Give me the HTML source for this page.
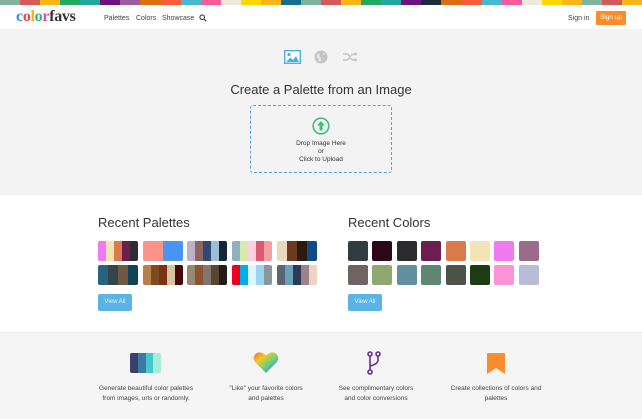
<!DOCTYPE html>
<html><head><meta charset="utf-8"><style>
*{margin:0;padding:0;box-sizing:border-box}
body{width:642px;height:419px;overflow:hidden;font-family:"Liberation Sans",sans-serif;background:#fff;position:relative;color:#333}
.abs{position:absolute}
.stripe{top:0;left:0;width:642px;height:5px;display:flex}
.stripe div{flex:1}
.nav{top:5px;left:0;width:642px;height:24px;background:#fff}
.logo{left:16px;top:9px;font-size:16px;font-weight:bold;letter-spacing:-0.3px;font-family:"Liberation Serif",serif;line-height:16px}
.navl{top:15px;font-size:7px;color:#444}
.hero{top:29px;left:0;width:642px;height:166px;background:#f3f3f3}
h2{font-weight:normal;font-size:13px;color:#333;position:absolute}
.drop{left:250px;top:105px;width:142px;height:68px;border:1.5px dashed #5b9ee0;border-radius:3px;text-align:center;font-size:6.5px;line-height:8px;color:#333}
.sw{position:absolute;height:20px;width:40px;border-radius:2px;overflow:hidden;display:flex}
.sw div{flex:1}
.sq{position:absolute;width:20px;height:20px;border-radius:2px}
.btn{position:absolute;width:34px;height:17px;background:#5ab4e6;border-radius:2px;color:#e8f4fb;font-size:6px;text-align:center;line-height:17px}
.foot{top:332px;left:0;width:642px;height:87px;background:#f4f5f4;border-top:1px solid #ececec}
.ft{position:absolute;top:384px;font-size:6.5px;line-height:10px;color:#444;text-align:center;width:140px}
</style></head><body>
<div class="abs stripe">
<div style="background:#7fb39b"></div><div style="background:#d45a5a"></div><div style="background:#fbb517"></div><div style="background:#22a85f"></div><div style="background:#1fa99f"></div><div style="background:#6c1380"></div><div style="background:#9d5aa5"></div><div style="background:#db6e10"></div><div style="background:#fb5a3a"></div><div style="background:#4ab7d4"></div><div style="background:#fc5b9b"></div><div style="background:#efe9dc"></div><div style="background:#fed700"></div><div style="background:#fbb517"></div><div style="background:#186e90"></div><div style="background:#7fb39b"></div><div style="background:#d45a5a"></div><div style="background:#fbb517"></div><div style="background:#22a85f"></div><div style="background:#1fa99f"></div><div style="background:#6c1380"></div><div style="background:#1b2b3b"></div><div style="background:#db6e10"></div><div style="background:#fb5a3a"></div><div style="background:#4ab7d4"></div><div style="background:#fc5b9b"></div><div style="background:#efe9dc"></div><div style="background:#fed700"></div><div style="background:#fbb517"></div><div style="background:#7fb39b"></div><div style="background:#d45a5a"></div><div style="background:#fbb517"></div>
</div>
<div class="abs nav"></div>
<div class="abs logo"><span style="color:#3a8fd6">c</span><span style="color:#e84b3c">o</span><span style="color:#f3b21b">l</span><span style="color:#2bb673">o</span><span style="color:#e84b9b">r</span><span style="color:#333">favs</span></div>
<div class="abs navl" style="left:104px">Palettes</div>
<div class="abs navl" style="left:136px">Colors</div>
<div class="abs navl" style="left:162px">Showcase</div>
<svg class="abs" style="left:199px;top:14px" width="8" height="8" viewBox="0 0 8 8"><circle cx="3.2" cy="3.2" r="2.3" fill="none" stroke="#444" stroke-width="1.1"/><path d="M5 5L7.3 7.3" stroke="#444" stroke-width="1.2"/></svg>
<div class="abs navl" style="left:568px">Sign in</div>
<div class="abs" style="left:596px;top:11px;width:30px;height:14px;background:#fd8c28;color:#fff;font-size:6.5px;text-align:center;line-height:14px;border-radius:1px">Sign up</div>
<div class="abs hero"></div>
<svg class="abs" style="left:284px;top:50px" width="17" height="14" viewBox="0 0 17 14"><rect x="0.7" y="0.7" width="15.6" height="12.6" fill="#fff" stroke="#4ab0e6" stroke-width="1.4"/><circle cx="5" cy="4.5" r="1.6" fill="#4ab0e6"/><path d="M2 12L6.5 7.5L9 10L12 6L15 12Z" fill="#4ab0e6"/></svg>
<svg class="abs" style="left:314px;top:50px" width="14" height="14" viewBox="0 0 14 14"><circle cx="7" cy="7" r="6.5" fill="#c4c4c4"/><path d="M3 4Q5 3 6 5Q5 7 7 8Q8 10 6 12Q4 10 4 8Q2 7 3 4ZM9 2Q11 3 11 5Q9 5 9 2Z" fill="#e4e4e4"/></svg>
<svg class="abs" style="left:342px;top:51px" width="16" height="12" viewBox="0 0 16 12"><path d="M1 3H4Q7 3 8 6Q9 9 12 9H14M1 9H4Q6 9 7 7M9 5Q10 3 12 3H14" fill="none" stroke="#c4c4c4" stroke-width="1.6"/><path d="M13 1L15.5 3L13 5ZM13 7L15.5 9L13 11Z" fill="#c4c4c4"/></svg>
<h2 style="left:0;width:642px;text-align:center;top:82px">Create a Palette from an Image</h2>
<div class="abs drop">
<svg style="margin-top:11px" width="18" height="18" viewBox="0 0 18 18"><circle cx="9" cy="9" r="7.8" fill="none" stroke="#3fbf7f" stroke-width="1.6"/><path d="M9 4L13 8.5H10.5V13.5H7.5V8.5H5Z" fill="#3fbf7f"/></svg>
<div style="margin-top:2px">Drop Image Here<br>or<br>Click to Upload</div>
</div>
<h2 style="left:98px;top:215px">Recent Palettes</h2>
<h2 style="left:348px;top:215px">Recent Colors</h2>
<div class="sw" style="left:98px;top:241px"><div style="background:#f07bf0"></div><div style="background:#f2e4b4"></div><div style="background:#db7b4b"></div><div style="background:#6a1f4e"></div><div style="background:#2d2d33"></div></div>
<div class="sw" style="left:143px;top:241px"><div style="background:#fa948a"></div><div style="background:#4a94f3"></div></div>
<div class="sw" style="left:187px;top:241px"><div style="background:#bfb1c4"></div><div style="background:#8d6663"></div><div style="background:#2d4a71"></div><div style="background:#9dbdd4"></div><div style="background:#13263a"></div></div>
<div class="sw" style="left:232px;top:241px"><div style="background:#8fb1bd"></div><div style="background:#d4ebad"></div><div style="background:#fdd0dd"></div><div style="background:#da5973"></div><div style="background:#f3a0a5"></div></div>
<div class="sw" style="left:277px;top:241px"><div style="background:#e8d8bd"></div><div style="background:#6c3a1e"></div><div style="background:#2c1a10"></div><div style="background:#0f4c84"></div></div>
<div class="sw" style="left:98px;top:265px"><div style="background:#28647f"></div><div style="background:#33454a"></div><div style="background:#6e5a44"></div><div style="background:#124455"></div></div>
<div class="sw" style="left:143px;top:265px"><div style="background:#b58148"></div><div style="background:#7d4a22"></div><div style="background:#7a3410"></div><div style="background:#d7c2a3"></div><div style="background:#4a0808"></div></div>
<div class="sw" style="left:187px;top:265px"><div style="background:#968872"></div><div style="background:#8c5431"></div><div style="background:#82766e"></div><div style="background:#594632"></div><div style="background:#221c1a"></div></div>
<div class="sw" style="left:232px;top:265px"><div style="background:#e8001c"></div><div style="background:#00aee8"></div><div style="background:#d9f8fd"></div><div style="background:#9bd4ee"></div><div style="background:#8a969c"></div></div>
<div class="sw" style="left:277px;top:265px"><div style="background:#5e6472"></div><div style="background:#6aa0b8"></div><div style="background:#2c3a58"></div><div style="background:#9a8288"></div><div style="background:#ecd3c2"></div></div>
<div class="btn" style="left:98px;top:294px">View All</div>
<div class="sq" style="left:348px;top:241px;background:#2f3d40"></div>
<div class="sq" style="left:372px;top:241px;background:#2c0718"></div>
<div class="sq" style="left:397px;top:241px;background:#2b2b2f"></div>
<div class="sq" style="left:421px;top:241px;background:#6b1f4e"></div>
<div class="sq" style="left:446px;top:241px;background:#db7b4b"></div>
<div class="sq" style="left:470px;top:241px;background:#f2e4b4"></div>
<div class="sq" style="left:494px;top:241px;background:#f07bf0"></div>
<div class="sq" style="left:519px;top:241px;background:#9b6b8c"></div>
<div class="sq" style="left:348px;top:265px;background:#6e6462"></div>
<div class="sq" style="left:372px;top:265px;background:#8fa871"></div>
<div class="sq" style="left:397px;top:265px;background:#62909f"></div>
<div class="sq" style="left:421px;top:265px;background:#5e8670"></div>
<div class="sq" style="left:446px;top:265px;background:#4b5446"></div>
<div class="sq" style="left:470px;top:265px;background:#1e3c13"></div>
<div class="sq" style="left:494px;top:265px;background:#fd92d6"></div>
<div class="sq" style="left:519px;top:265px;background:#b8bcd8"></div>
<div class="btn" style="left:348px;top:294px">View All</div>
<div class="abs foot"></div>
<div class="abs" style="left:130px;top:353px;width:31px;height:20px;display:flex;border-radius:2px;overflow:hidden"><div style="flex:1;background:#3b3f6b"></div><div style="flex:1;background:#3a7aa0"></div><div style="flex:1;background:#44c8d0"></div><div style="flex:1;background:#a8ecd8"></div></div>
<svg class="abs" style="left:253px;top:351px" width="26" height="23" viewBox="0 0 26 23"><defs><linearGradient id="g" x1="0" y1="0" x2="1" y2="1"><stop offset="0" stop-color="#f36c2b"/><stop offset=".3" stop-color="#f3c62b"/><stop offset=".55" stop-color="#7bd26a"/><stop offset=".8" stop-color="#3ba4e6"/><stop offset="1" stop-color="#9a6fd6"/></linearGradient></defs><path d="M13 22L2.5 11.5Q-1 7 2.5 3Q7 -1 13 4.5Q19 -1 23.5 3Q27 7 23.5 11.5Z" fill="url(#g)"/></svg>
<svg class="abs" style="left:367px;top:351px" width="14" height="24" viewBox="0 0 14 24"><g fill="none" stroke="#6a2c93" stroke-width="1.6"><circle cx="3" cy="3" r="2"/><circle cx="11" cy="3" r="2"/><circle cx="3" cy="21" r="2"/><path d="M3 5V19M11 5V9Q11 13 3 15"/></g></svg>
<svg class="abs" style="left:487px;top:353px" width="18" height="22" viewBox="0 0 18 22"><path d="M0 1Q0 0 1 0H17Q18 0 18 1V21L9 15L0 21Z" fill="#fd8c2e"/></svg>
<div class="ft" style="left:76px">Generate beautiful color palettes<br>from images, urls or randomly.</div>
<div class="ft" style="left:196px">"Like" your favorite colors<br>and palettes</div>
<div class="ft" style="left:306px">See complimentary colors<br>and color conversions</div>
<div class="ft" style="left:426px">Create collections of colors and<br>palettes</div>
</body></html>
